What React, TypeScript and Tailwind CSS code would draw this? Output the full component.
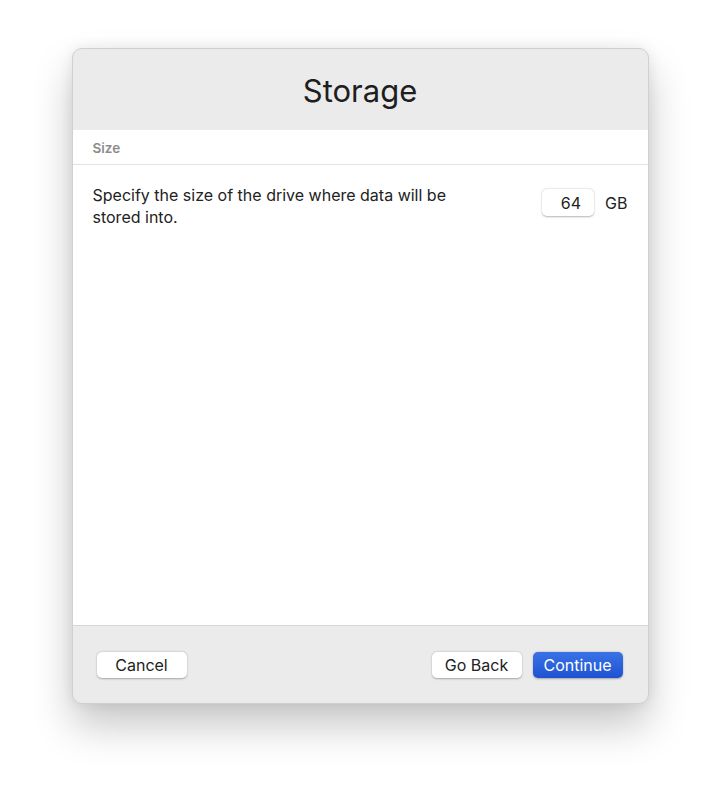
export default function App() {
  const font = { fontFamily: 'Inter, "Liberation Sans", Arial, sans-serif' };
  return (
    <div className="w-[720px] h-[798px] bg-white pt-[48px]" style={font}>
      <div className="mx-auto w-[577px] h-[656px] rounded-[10px] border border-[#d0d0d0] bg-[#ebebeb] shadow-[0_22px_40px_rgba(0,0,0,0.22),0_0_14px_rgba(0,0,0,0.08)] flex flex-col overflow-hidden">
        <div className="h-[81px] flex items-center justify-center">
          <h1 className="text-[31px] text-[#1e1e1e] leading-none pt-[1px]">Storage</h1>
        </div>
        <div className="flex-1 bg-white flex flex-col border-b border-[#d6d6d6]">
          <div className="h-[35px] border-b border-[#e2e2e2] flex items-center pl-[20px] pt-[3px]">
            <span className="text-[13.5px] font-semibold text-[#8c8c8c]">Size</span>
          </div>
          <div className="flex items-start justify-between pl-[20px] pr-[20px] pt-[19px]">
            <p className="w-[400px] text-[16px] leading-[22px] text-[#222]">
              Specify the size of the drive where data will be stored into.
            </p>
            <div className="flex items-center gap-[11px] pt-[5px]">
              <div className="w-[52px] h-[27px] rounded-[5px] bg-white shadow-[0_0.5px_2px_rgba(0,0,0,0.3)] flex items-center justify-end pr-[13px] text-[16px] text-[#222]">
                64
              </div>
              <span className="text-[16px] text-[#222]">GB</span>
            </div>
          </div>
        </div>
        <div className="h-[77px] flex items-center justify-between px-[24px] pt-[1px]">
          <button className="w-[90px] h-[26px] rounded-[5px] bg-white shadow-[0_0.5px_2px_rgba(0,0,0,0.3)] text-[16px] text-[#222]">
            Cancel
          </button>
          <div className="flex gap-[11px] pr-[1px]">
            <button className="w-[90px] h-[26px] rounded-[5px] bg-white shadow-[0_0.5px_2px_rgba(0,0,0,0.3)] text-[16px] text-[#222]">
              Go Back
            </button>
            <button className="w-[90px] h-[26px] rounded-[5px] bg-gradient-to-b from-[#3a72e6] to-[#1f52d2] shadow-[0_0.5px_2px_rgba(0,0,0,0.3)] text-[16px] text-white">
              Continue
            </button>
          </div>
        </div>
      </div>
    </div>
  );
}
